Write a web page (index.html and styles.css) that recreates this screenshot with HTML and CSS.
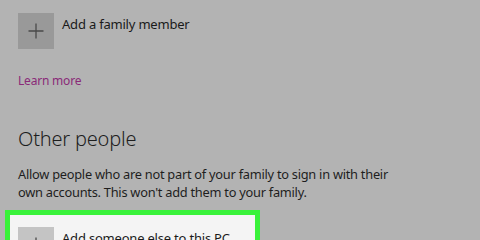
FILE: index.html
```html
<!DOCTYPE html>
<html>
<head>
<meta charset="utf-8">
<link rel="stylesheet" href="styles.css">
</head>
<body>
<div class="page">
  <div class="row family">
    <div class="tile dark"><svg width="16" height="16" viewBox="0 0 16 16"><path d="M8 0.5V15.5M0.5 8H15.5" stroke="#4a4a4a" stroke-width="1.3" fill="none"/></svg></div>
    <div class="label">Add a family member</div>
  </div>
  <a class="learn">Learn more</a>
  <h2 class="heading">Other people</h2>
  <p class="desc">Allow people who are not part of your family to sign in with their own accounts. This won't add them to your family.</p>
  <div class="highlight">
    <div class="row">
      <div class="tile light"><svg width="16" height="16" viewBox="0 0 16 16"><path d="M8 0.5V15.5M0.5 8H15.5" stroke="#4a4a4a" stroke-width="1.3" fill="none"/></svg></div>
      <div class="label">Add someone else to this PC</div>
    </div>
  </div>
</div>
</body>
</html>
```
FILE: styles.css
```css
html, body {
  margin: 0;
  padding: 0;
  background: #b3b3b3;
  width: 480px;
  height: 240px;
  overflow: hidden;
  font-family: "Noto Sans", "Open Sans", sans-serif;
  color: #1e1e1e;
}
.page {
  display: flex;
  flex-direction: column;
  align-items: flex-start;
  padding: 13px 0 0 18px;
}
.row {
  display: flex;
  align-items: flex-start;
  gap: 8px;
}
.tile {
  width: 36px;
  height: 36px;
  display: flex;
  align-items: center;
  justify-content: center;
  flex: none;
}
.tile.dark { background: #999999; }
.tile.light { background: #c4c4c4; }
.label {
  font-size: 13px;
  line-height: 18px;
  padding-top: 2px;
  color: #1a1a1a;
  letter-spacing: -0.2px;
}
.learn {
  margin-top: 24px;
  font-size: 12px;
  line-height: 16px;
  color: #8a2a78;
  letter-spacing: -0.2px;
}
.heading {
  margin: 37px 0 0;
  font-size: 20px;
  font-weight: 300;
  line-height: 26px;
  color: #1e1e1e;
  letter-spacing: -0.2px;
}
.desc {
  margin: 13px 0 0;
  width: 390px;
  font-size: 12.8px;
  line-height: 18px;
  color: #1e1e1e;
  letter-spacing: -0.25px;
}
.highlight {
  margin: 9px 0 0 -13px;
  width: 237px;
  border: 5px solid #39f23a;
  background: #f4f4f4;
  padding: 12px 0 12px 8px;
}
```
